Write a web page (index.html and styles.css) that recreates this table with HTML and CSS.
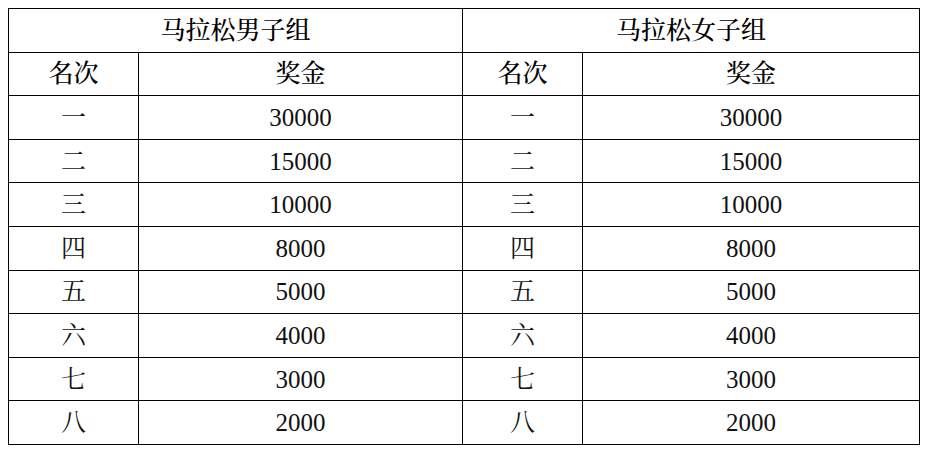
FILE: index.html
```html
<!DOCTYPE html>
<html lang="zh">
<head>
<meta charset="utf-8">
<link rel="stylesheet" href="styles.css">
</head>
<body>
<table class="prize">
  <colgroup>
    <col class="c-rank"><col class="c-money"><col class="c-rank2"><col class="c-money2">
  </colgroup>
  <thead>
    <tr class="title"><th colspan="2">马拉松男子组</th><th colspan="2">马拉松女子组</th></tr>
    <tr class="head"><th>名次</th><th>奖金</th><th>名次</th><th>奖金</th></tr>
  </thead>
  <tbody>
    <tr><td>一</td><td>30000</td><td>一</td><td>30000</td></tr>
    <tr><td>二</td><td>15000</td><td>二</td><td>15000</td></tr>
    <tr><td>三</td><td>10000</td><td>三</td><td>10000</td></tr>
    <tr><td>四</td><td>8000</td><td>四</td><td>8000</td></tr>
    <tr><td>五</td><td>5000</td><td>五</td><td>5000</td></tr>
    <tr><td>六</td><td>4000</td><td>六</td><td>4000</td></tr>
    <tr><td>七</td><td>3000</td><td>七</td><td>3000</td></tr>
    <tr><td>八</td><td>2000</td><td>八</td><td>2000</td></tr>
  </tbody>
</table>
</body>
</html>
```
FILE: styles.css
```css
html, body {
  background: #ffffff;
}
body {
  margin: 8px;
  font-family: "Liberation Serif", "Noto Serif CJK SC", "Noto Sans CJK SC", serif;
  color: #111;
}
.prize {
  border-collapse: collapse;
  table-layout: fixed;
  width: 911px;
}
.c-rank { width: 130px; }
.c-money { width: 324px; }
.c-rank2 { width: 120px; }
.c-money2 { width: 337px; }
.prize th,
.prize td {
  border: 1px solid #000;
  height: 42.6px;
  padding: 0;
  text-align: center;
  vertical-align: middle;
  font-size: 25px;
  line-height: 1;
}
.prize th {
  font-weight: 500;
  color: #000;
}
.prize td {
  font-weight: 400;
}
```
